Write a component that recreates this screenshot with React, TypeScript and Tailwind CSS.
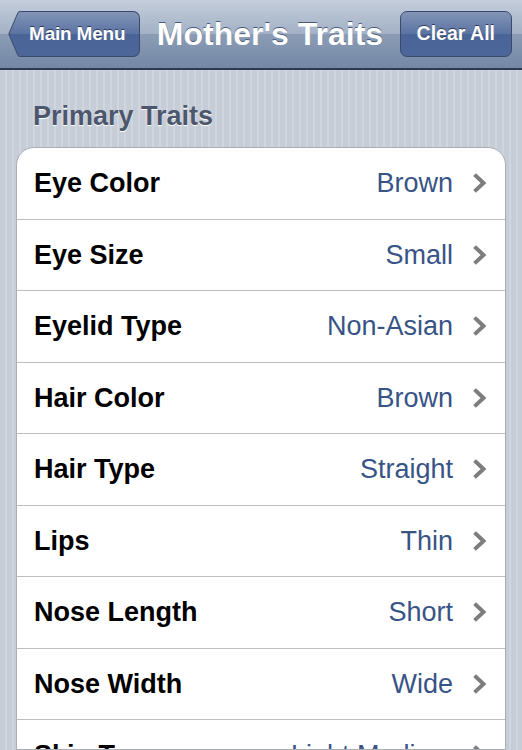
type Trait = {
  label: string;
  value: string;
};

const TRAITS: Trait[] = [
  { label: 'Eye Color', value: 'Brown' },
  { label: 'Eye Size', value: 'Small' },
  { label: 'Eyelid Type', value: 'Non-Asian' },
  { label: 'Hair Color', value: 'Brown' },
  { label: 'Hair Type', value: 'Straight' },
  { label: 'Lips', value: 'Thin' },
  { label: 'Nose Length', value: 'Short' },
  { label: 'Nose Width', value: 'Wide' },
  { label: 'Skin Tone', value: 'Light Medium' },
];

function Chevron() {
  return (
    <svg width="14" height="20" viewBox="0 0 14 20" className="ml-[20px] shrink-0">
      <path d="M3 3 L10.5 10 L3 17" fill="none" stroke="#7d7d7d" strokeWidth="4" strokeLinecap="square" strokeLinejoin="miter" />
    </svg>
  );
}

function BackButton() {
  return (
    <div className="relative flex h-[46px] shrink-0 items-center">
      {/* pointed left edge */}
      <svg width="16" height="46" viewBox="0 0 16 46" className="-mr-px shrink-0">
        <defs>
          <linearGradient id="backGrad" x1="0" y1="0" x2="0" y2="1">
            <stop offset="0" stopColor="#8295b8" />
            <stop offset="0.5" stopColor="#5b73a2" />
            <stop offset="0.5" stopColor="#4a6497" />
            <stop offset="1" stopColor="#4d679b" />
          </linearGradient>
        </defs>
        <path d="M16 0.5 L12 0.5 Q11 0.5 10 1.5 L0.8 23 L10 44.5 Q11 45.5 12 45.5 L16 45.5 Z" fill="url(#backGrad)" stroke="#3a4a6a" strokeWidth="1" />
      </svg>
      <div className="flex h-[46px] items-center rounded-r-[7px] border border-l-0 border-[#3a4a6a] bg-[linear-gradient(#8295b8,#5b73a2_50%,#4a6497_50%,#4d679b)] pl-[6px] pr-[14px]">
        <span className="text-[19px] font-bold tracking-[-0.2px] text-white [text-shadow:0_-1px_0_#2d3c5a]">Main Menu</span>
      </div>
    </div>
  );
}

export default function App() {
  return (
    <div
      className="flex h-[750px] w-[522px] flex-col overflow-hidden bg-[repeating-linear-gradient(90deg,#c6cdd7_0px,#c6cdd7_5px,#d0d6df_5px,#d0d6df_7px)]"
      style={{ fontFamily: '"Liberation Sans", Arial, sans-serif' }}
    >
      {/* navigation bar */}
      <div className="flex h-[70px] shrink-0 items-center border-b-2 border-[#2f3b52] bg-[linear-gradient(#c4cedc,#a3b1c6_50%,#8c9cb5_50%,#7388a6)] pl-[8px] pr-[10px]">
        <BackButton />
        <div className="flex-1 text-center text-[32px] font-bold text-white [text-shadow:0_-1px_0_#4a5a75]">
          Mother's Traits
        </div>
        <div className="flex h-[46px] shrink-0 items-center rounded-[7px] border border-[#3a4a6a] bg-[linear-gradient(#8295b8,#5b73a2_50%,#4a6497_50%,#4d679b)] px-[16px]">
          <span className="text-[19.5px] font-bold text-white [text-shadow:0_-1px_0_#2d3c5a]">Clear All</span>
        </div>
      </div>

      {/* section header */}
      <div className="px-[33px] pt-[31px] pb-[16px] text-[27px] leading-[30px] font-bold text-[#4c566c] [text-shadow:0_1px_0_#ffffff]">
        Primary Traits
      </div>

      {/* grouped list */}
      <div className="ml-[16px] w-[490px] overflow-hidden rounded-t-[18px] border border-[#a9adb4] bg-white">
        {TRAITS.map((t) => (
          <div
            key={t.label}
            className="flex h-[71.5px] items-center border-b border-[#bdbdbd] pr-[18px] pl-[17px]"
          >
            <span className="flex-1 text-[27px] font-bold text-black">{t.label}</span>
            <span className="text-[27px] text-[#385487]">{t.value}</span>
            <Chevron />
          </div>
        ))}
      </div>
    </div>
  );
}
